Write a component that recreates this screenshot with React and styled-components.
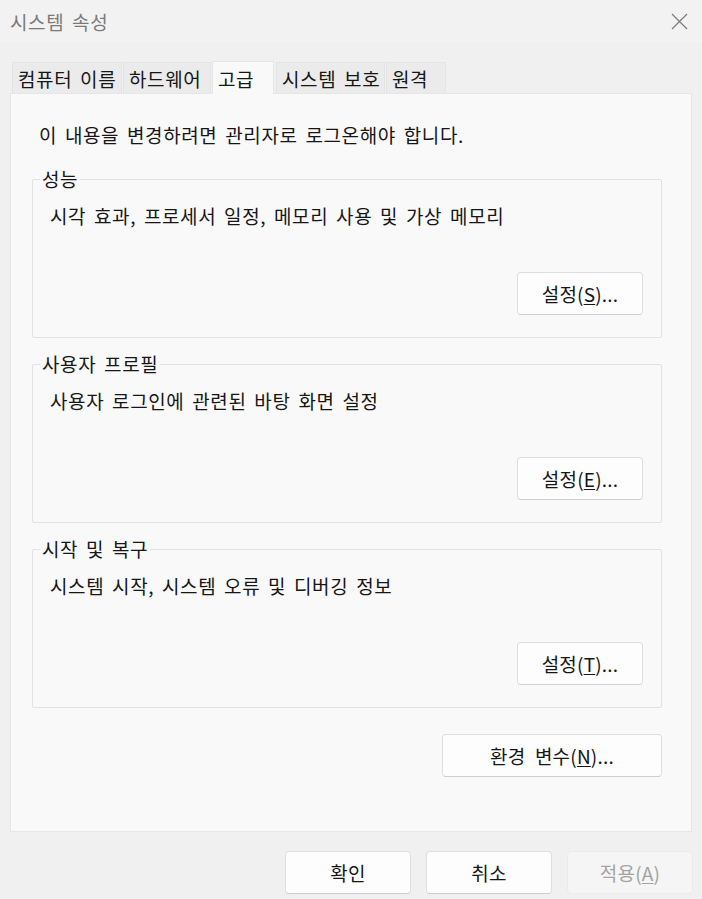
import React from 'react';
import styled, { createGlobalStyle } from 'styled-components';

const GlobalStyle = createGlobalStyle`
  html, body {
    margin: 0;
    padding: 0;
    background: #f0f0f0;
  }
  body {
    font-family: "Noto Sans CJK KR", "Noto Sans", sans-serif;
    color: #161616;
    letter-spacing: 0.6px;
    word-spacing: 3px;
  }
`;

const Window = styled.div`
  width: 702px;
  height: 899px;
  display: flex;
  flex-direction: column;
  background: #f0f0f0;
  overflow: hidden;
`;

const TitleBar = styled.div`
  height: 42px;
  display: flex;
  align-items: center;
  justify-content: space-between;
  padding: 0 14px 0 10px;
  background: #f2f2f2;
`;

const Title = styled.div`
  font-size: 19px;
  color: #7a7a7a;
`;

const CloseButton = styled.button`
  width: 18px;
  height: 18px;
  padding: 0;
  border: none;
  background: transparent;
  display: flex;
  align-items: center;
  justify-content: center;
`;

const TabStrip = styled.div`
  display: flex;
  align-items: flex-end;
  margin: 18px 0 0 12px;
  height: 33px;
`;

const Tab = styled.div`
  width: ${(p) => p.$width}px;
  height: ${(p) => (p.$active ? '33px' : '31px')};
  box-sizing: border-box;
  padding-left: 5px;
  margin-right: ${(p) => (p.$active ? '2px' : '1px')};
  display: flex;
  align-items: center;
  font-size: 19px;
  color: #161616;
  background: ${(p) => (p.$active ? '#f9f9f9' : '#ebebeb')};
  border: 1px solid ${(p) => (p.$active ? '#e6e6e6' : '#e4e4e4')};
  border-bottom: none;
  position: relative;
  z-index: ${(p) => (p.$active ? 1 : 0)};
  margin-bottom: ${(p) => (p.$active ? '-1px' : '0')};
`;

const Panel = styled.div`
  margin: 0 10px;
  height: 739px;
  box-sizing: border-box;
  background: #f9f9f9;
  border: 1px solid #e6e6e6;
  padding: 29px 29px 0 21px;
  display: flex;
  flex-direction: column;
`;

const Notice = styled.p`
  margin: 0 0 20px 7px;
  font-size: 19px;
  line-height: 24px;
`;

const Group = styled.fieldset`
  margin: 0 0 14px 0;
  padding: 13px 18px 22px 17px;
  border: 1px solid #e2e2e2;
  border-radius: 2px;
  min-width: 0;
`;

const Legend = styled.legend`
  margin-left: -10px;
  padding: 0 2px;
  font-size: 19px;
  line-height: 24px;
`;

const Description = styled.div`
  font-size: 19px;
  line-height: 24px;
`;

const ButtonRow = styled.div`
  display: flex;
  justify-content: flex-end;
  gap: ${(p) => p.$gap || 0}px;
  margin-top: ${(p) => p.$top || 0}px;
`;

const Button = styled.button`
  width: ${(p) => p.$width || 126}px;
  height: 43px;
  box-sizing: border-box;
  font-family: "Noto Sans CJK KR", "Noto Sans", sans-serif;
  font-size: 19px;
  letter-spacing: 0.2px;
  word-spacing: 5px;
  color: #161616;
  background: #fdfdfd;
  border: 1px solid #dedede;
  border-bottom-color: #cfcfcf;
  border-radius: 4px;
  padding: 0;
  display: flex;
  align-items: center;
  justify-content: center;

  &:disabled {
    background: #f5f5f5;
    border-color: #ebebeb;
    color: #a3a3a3;
  }

  u {
    text-decoration-thickness: 1px;
    text-underline-offset: 2px;
  }
`;

const Footer = styled.div`
  display: flex;
  justify-content: flex-end;
  gap: 15px;
  padding: 19px 9px 0 0;
`;

const groups = [
  { title: '성능', text: '시각 효과, 프로세서 일정, 메모리 사용 및 가상 메모리', key: 'S' },
  { title: '사용자 프로필', text: '사용자 로그인에 관련된 바탕 화면 설정', key: 'E' },
  { title: '시작 및 복구', text: '시스템 시작, 시스템 오류 및 디버깅 정보', key: 'T' },
];

const tabs = [
  { label: '컴퓨터 이름', width: 110 },
  { label: '하드웨어', width: 88 },
  { label: '고급', width: 62 },
  { label: '시스템 보호', width: 109 },
  { label: '원격', width: 60 },
];

export default function App() {
  return (
    <>
      <GlobalStyle />
      <Window>
        <TitleBar>
          <Title>시스템 속성</Title>
          <CloseButton aria-label="닫기">
            <svg width="17" height="17" viewBox="0 0 17 17">
              <path d="M1 1 L16 16 M16 1 L1 16" stroke="#7a7a7a" strokeWidth="1.2" fill="none" />
            </svg>
          </CloseButton>
        </TitleBar>

        <TabStrip>
          {tabs.map((t) => (
            <Tab key={t.label} $width={t.width} $active={t.label === '고급'}>
              {t.label}
            </Tab>
          ))}
        </TabStrip>

        <Panel>
          <Notice>이 내용을 변경하려면 관리자로 로그온해야 합니다.</Notice>

          {groups.map((g) => (
            <Group key={g.title}>
              <Legend>{g.title}</Legend>
              <Description>{g.text}</Description>
              <ButtonRow $top={44}>
                <Button>
                  설정(<u>{g.key}</u>)...
                </Button>
              </ButtonRow>
            </Group>
          ))}

          <ButtonRow $top={12}>
            <Button $width={220}>
              환경 변수(<u>N</u>)...
            </Button>
          </ButtonRow>
        </Panel>

        <Footer>
          <Button>확인</Button>
          <Button>취소</Button>
          <Button disabled>
            적용(<u>A</u>)
          </Button>
        </Footer>
      </Window>
    </>
  );
}
